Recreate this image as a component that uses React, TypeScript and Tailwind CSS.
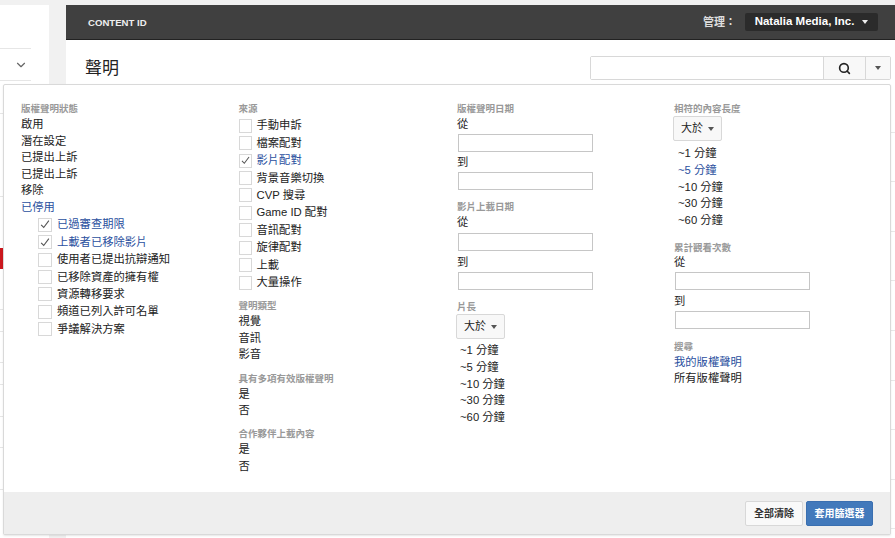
import { ChevronDown, Search } from "lucide-react";

const font = { fontFamily: '"Liberation Sans", "Noto Sans CJK TC", sans-serif' };

function Heading({ children, className = "" }: { children: string; className?: string }) {
  return <div className={`text-[9.5px] leading-[14px] font-bold text-[#999] ${className}`}>{children}</div>;
}

function Item({ children, active, className = "" }: { children: string; active?: boolean; className?: string }) {
  return <div className={`h-[16.5px] text-[11.3px] leading-[16.5px] ${active ? "text-[#2a4f9e]" : "text-[#222]"} ${className}`}>{children}</div>;
}

function Check({ label, checked, small }: { label: string; checked?: boolean; small?: boolean }) {
  return (
    <div className="flex h-[17.45px] items-center gap-[5px]">
      <span className={`flex h-[14px] shrink-0 items-center justify-center border border-[#d8d8d8] bg-white ${small ? "w-[13px]" : "w-[14px]"}`}>
        {checked && (
          <svg viewBox="0 0 14 14" className="h-[13px] w-[13px]" fill="none" stroke="#555" strokeWidth="1.3">
            <path d="M2.5 7.5 L5.5 10.5 L11.5 2.5" />
          </svg>
        )}
      </span>
      <span className={`text-[11.3px] whitespace-nowrap ${checked ? "text-[#2a4f9e]" : "text-[#222]"}`}>{label}</span>
    </div>
  );
}

function TextBox({ className = "" }: { className?: string }) {
  return <div className={`h-[18px] w-[135px] border border-[#c6c6c6] bg-white ${className}`} />;
}

function Caret({ color = "#555" }: { color?: string }) {
  return <span className="h-0 w-0 border-x-[3.5px] border-t-[4px] border-x-transparent" style={{ borderTopColor: color }} />;
}

function Select() {
  return (
    <div className="-ml-[1px] flex h-[25px] w-[49px] items-center justify-center gap-[5px] rounded-[2px] border border-[#d8d8d8] bg-[#f8f8f8] text-[11px] text-[#222]">
      大於
      <Caret />
    </div>
  );
}

function Lengths({ active }: { active?: string }) {
  return (
    <div className="flex flex-col gap-[0.3px]">
      {["~1 分鐘", "~5 分鐘", "~10 分鐘", "~30 分鐘", "~60 分鐘"].map((t) => (
        <Item key={t} active={t === active}>
          {t}
        </Item>
      ))}
    </div>
  );
}

const navRows = [33, 83, 113, 22, 31, 22, 32, 31, 42];

function Sidebar() {
  return (
    <div className="mt-[5px] w-[49px] shrink-0 bg-white">
      <div className="h-[44px] w-[31px] border-b border-[#e6e6e6]" />
      <div className="flex h-[32px] w-[31px] items-center justify-end border-b border-[#e6e6e6] pr-[3px]">
        <ChevronDown size={14} strokeWidth={2} className="text-[#666]" />
      </div>
      {navRows.map((h, i) => (
        <div key={i} className="w-[31px] border-b border-[#e6e6e6]" style={{ height: h }} />
      ))}
    </div>
  );
}

export default function App() {
  return (
    <div className="relative flex h-[538px] w-[895px] overflow-hidden bg-[#f1f1f1]" style={font}>
      <Sidebar />
      <div className="ml-[17px] mt-[5px] flex-1 bg-white">
        {/* Top bar */}
        <header className="flex h-[35px] items-center justify-between border-b border-[#222] bg-[#404040] pl-[22px] pr-[17px]">
          <span className="mt-[2px] text-[9.6px] font-bold text-[#eee]">CONTENT ID</span>
          <div className="flex items-center gap-[9px]">
            <span className="text-[11px] font-bold text-[#ddd]">管理：</span>
            <div className="flex h-[18px] w-[133px] items-center justify-center gap-[8px] rounded-[2px] bg-[#2b2b2b] text-[11.5px] font-bold text-white">
              Natalia Media, Inc.
              <Caret color="#eee" />
            </div>
          </div>
        </header>
        <div className="flex h-[43px] items-start justify-between pl-[19px] pr-[4px] pt-[16px]">
          <h1 className="mt-[1px] text-[17px] leading-[24px] font-normal text-[#222]">聲明</h1>
          <div className="flex h-[24px] rounded-[2px] border border-[#d8d8d8]">
            <div className="w-[232px] bg-white" />
            <div className="flex w-[42px] items-center justify-center border-l border-[#d8d8d8] bg-[#f8f8f8]">
              <Search size={13} strokeWidth={3} className="text-[#222]" />
            </div>
            <div className="flex w-[25px] items-center justify-center border-l border-[#d8d8d8] bg-[#f8f8f8]">
              <Caret />
            </div>
          </div>
        </div>
        {/* Table rows behind the filter panel */}
        {Array.from({ length: 9 }).map((_, i) => (
          <div key={i} className="h-[49.6px] border-b border-[#e8e8e8]" />
        ))}
      </div>

      {/* Active nav marker behind the filter panel */}
      <div className="absolute left-0 top-[248px] h-[21px] w-[3px] bg-[#cc181e]" />

      {/* Filter panel */}
      <div className="absolute left-[3px] top-[84px] flex h-[451px] w-[888px] flex-col rounded-[2px] border border-[#d9d9d9] bg-white shadow-[0_1px_2px_rgba(0,0,0,0.1)]">
        <div className="grid flex-1 grid-cols-[217.5px_218.5px_217px_1fr] pl-[17px] pt-[17px]">
          <div>
            <Heading>版權聲明狀態</Heading>
            <Item>啟用</Item>
            <Item>潛在設定</Item>
            <Item>已提出上訴</Item>
            <Item>已提出上訴</Item>
            <Item>移除</Item>
            <Item active>已停用</Item>
            <div className="mt-[1px] pl-[17px]">
              <Check label="已過審查期限" checked />
              <Check label="上載者已移除影片" checked />
              <Check label="使用者已提出抗辯通知" />
              <Check label="已移除資產的擁有權" />
              <Check label="資源轉移要求" />
              <Check label="頻道已列入許可名單" />
              <Check label="爭議解決方案" />
            </div>
          </div>

          <div>
            <Heading className="mb-[1px]">來源</Heading>
            <Check small label="手動申訴" />
            <Check small label="檔案配對" />
            <Check small label="影片配對" checked />
            <Check small label="背景音樂切換" />
            <Check small label="CVP 搜尋" />
            <Check small label="Game ID 配對" />
            <Check small label="音訊配對" />
            <Check small label="旋律配對" />
            <Check small label="上載" />
            <Check small label="大量操作" />
            <Heading className="mt-[8px]">聲明類型</Heading>
            <Item>視覺</Item>
            <Item>音訊</Item>
            <Item>影音</Item>
            <Heading className="mt-[9px]">具有多項有效版權聲明</Heading>
            <Item>是</Item>
            <Item>否</Item>
            <Heading className="mt-[8.5px]">合作夥伴上載內容</Heading>
            <Item>是</Item>
            <Item>否</Item>
          </div>

          <div>
            <Heading>版權聲明日期</Heading>
            <Item>從</Item>
            <TextBox className="ml-[1px] mt-[1px]" />
            <Item className="mt-[2px]">到</Item>
            <TextBox className="ml-[1px] mt-[2px]" />
            <Heading className="mt-[10px]">影片上載日期</Heading>
            <Item>從</Item>
            <TextBox className="ml-[1px] mt-[2px]" />
            <Item className="mt-[3px]">到</Item>
            <TextBox className="ml-[1px] mt-[2px]" />
            <Heading className="mt-[10px]">片長</Heading>
            <div className="mb-[3px]"><Select /></div>
            <div className="pl-[3px]"><Lengths /></div>
          </div>

          <div>
            <Heading>相符的內容長度</Heading>
            <div className="mb-[4px]"><Select /></div>
            <div className="pl-[4px]"><Lengths active="~5 分鐘" /></div>
            <Heading className="mt-[12px] -mb-[1px]">累計觀看次數</Heading>
            <Item>從</Item>
            <TextBox className="ml-[1px] mt-[2px]" />
            <Item className="mt-[3px]">到</Item>
            <TextBox className="ml-[1px] mt-[1px]" />
            <Heading className="mt-[11px]">搜尋</Heading>
            <Item active>我的版權聲明</Item>
            <Item>所有版權聲明</Item>
          </div>
        </div>

        {/* Footer */}
        <div className="flex h-[42px] items-center justify-end gap-[3px] bg-[#eeeeee] pr-[17px]">
          <button className="h-[25px] w-[58px] rounded-[2px] border border-[#d8d8d8] bg-[#f9f9f9] text-[10px] font-bold text-[#333]">全部清除</button>
          <button className="h-[25px] w-[67px] rounded-[2px] border border-[#3a6fb0] bg-[#4279bb] text-[10px] font-bold text-white">套用篩選器</button>
        </div>
      </div>
    </div>
  );
}
